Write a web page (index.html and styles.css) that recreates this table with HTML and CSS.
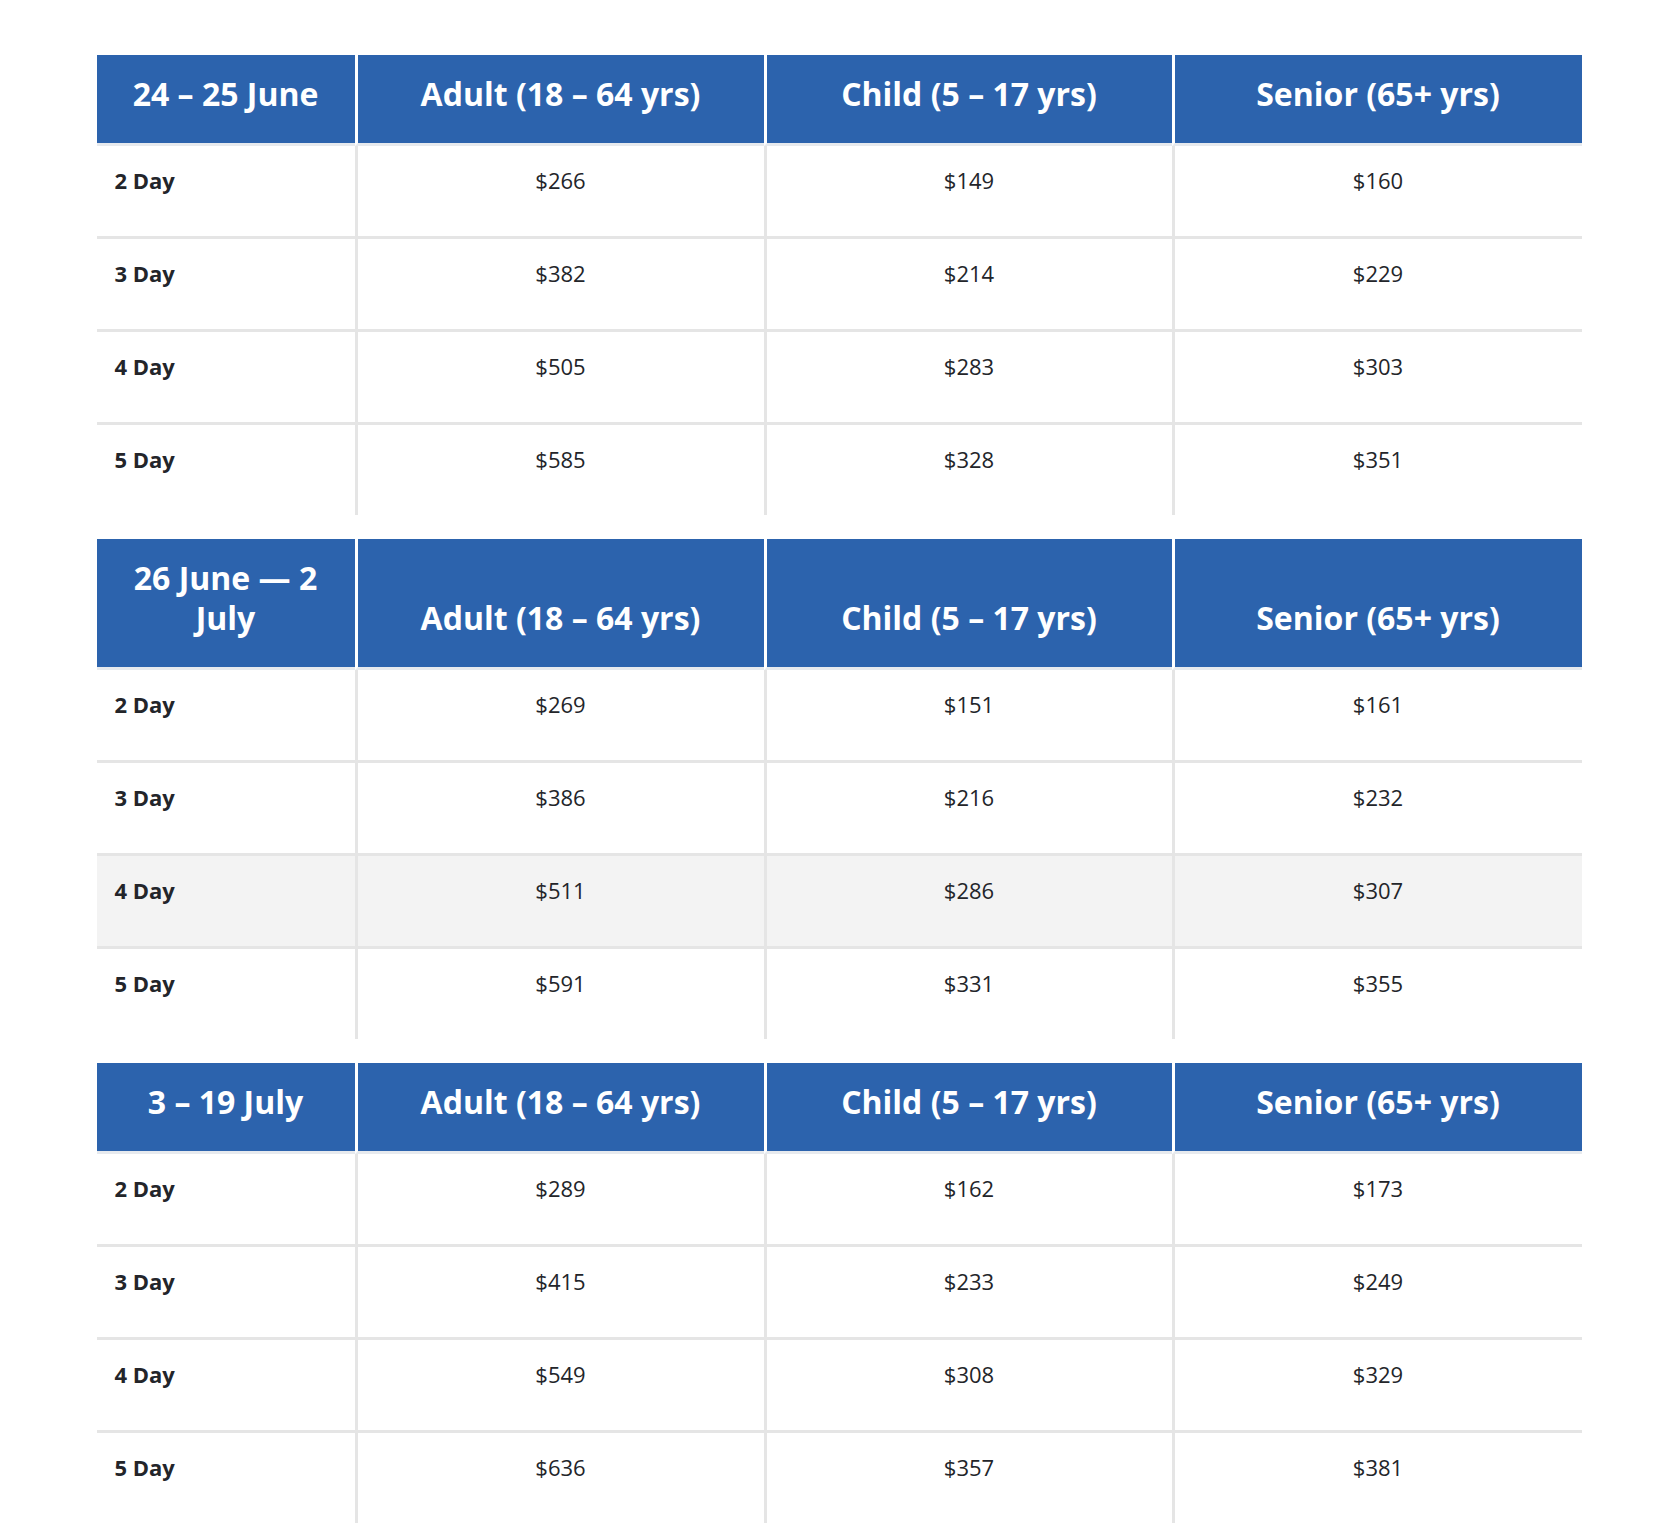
FILE: index.html
```html
<!DOCTYPE html>
<html lang="en">
<head>
<meta charset="utf-8">
<title>Ticket prices</title>
<link rel="stylesheet" href="styles.css">
</head>
<body>
<main class="prices">
  <table class="price-table">
    <thead>
      <tr>
        <th class="c1">24 – 25 June</th>
        <th class="c2">Adult (18 – 64 yrs)</th>
        <th class="c3">Child (5 – 17 yrs)</th>
        <th class="c4">Senior (65+ yrs)</th>
      </tr>
    </thead>
    <tbody>
      <tr><td>2 Day</td><td>$266</td><td>$149</td><td>$160</td></tr>
      <tr><td>3 Day</td><td>$382</td><td>$214</td><td>$229</td></tr>
      <tr><td>4 Day</td><td>$505</td><td>$283</td><td>$303</td></tr>
      <tr><td>5 Day</td><td>$585</td><td>$328</td><td>$351</td></tr>
    </tbody>
  </table>

  <table class="price-table">
    <thead>
      <tr>
        <th class="c1">26 June — 2 July</th>
        <th class="c2">Adult (18 – 64 yrs)</th>
        <th class="c3">Child (5 – 17 yrs)</th>
        <th class="c4">Senior (65+ yrs)</th>
      </tr>
    </thead>
    <tbody>
      <tr><td>2 Day</td><td>$269</td><td>$151</td><td>$161</td></tr>
      <tr><td>3 Day</td><td>$386</td><td>$216</td><td>$232</td></tr>
      <tr class="is-hover"><td>4 Day</td><td>$511</td><td>$286</td><td>$307</td></tr>
      <tr><td>5 Day</td><td>$591</td><td>$331</td><td>$355</td></tr>
    </tbody>
  </table>

  <table class="price-table">
    <thead>
      <tr>
        <th class="c1">3 – 19 July</th>
        <th class="c2">Adult (18 – 64 yrs)</th>
        <th class="c3">Child (5 – 17 yrs)</th>
        <th class="c4">Senior (65+ yrs)</th>
      </tr>
    </thead>
    <tbody>
      <tr><td>2 Day</td><td>$289</td><td>$162</td><td>$173</td></tr>
      <tr><td>3 Day</td><td>$415</td><td>$233</td><td>$249</td></tr>
      <tr><td>4 Day</td><td>$549</td><td>$308</td><td>$329</td></tr>
      <tr><td>5 Day</td><td>$636</td><td>$357</td><td>$381</td></tr>
    </tbody>
  </table>
</main>
</body>
</html>
```

FILE: styles.css
```css
html, body {
  margin: 0;
  padding: 0;
  background: #ffffff;
}

body {
  font-family: "Open Sans", "Liberation Sans", Arial, sans-serif;
  color: #23252a;
}

.prices {
  width: 1485px;
  margin: 0 auto;
  padding-top: 55px;
}

.price-table {
  width: 1485px;
  table-layout: fixed;
  border-collapse: separate;
  border-spacing: 0;
  margin-bottom: 24px;
}

.price-table th,
.price-table td {
  box-sizing: border-box;
}

.price-table th {
  background: #2c63ad;
  background-clip: padding-box;
  color: #ffffff;
  font-weight: 700;
  font-size: 32px;
  line-height: 40px;
  padding: 19px 18px 29px;
  text-align: center;
  vertical-align: bottom;
  border-bottom: 3px solid #e7eaee;
}

.price-table th + th {
  border-left: 3px solid #ffffff;
}

.price-table .c1 { width: 258px; }
.price-table .c2 { width: 409px; }
.price-table .c3 { width: 408px; }
.price-table .c4 { width: 410px; }

.price-table td {
  font-size: 22px;
  line-height: 30px;
  padding: 19px 18px 41px;
  text-align: center;
  vertical-align: top;
  color: #23252a;
}

.price-table td:first-child {
  text-align: left;
  font-weight: 700;
}

.price-table td + td {
  border-left: 3px solid #e5e5e5;
}

.price-table tbody tr + tr td {
  border-top: 3px solid #e5e5e5;
}

.price-table tr.is-hover td {
  background: #f3f3f3;
}
```
